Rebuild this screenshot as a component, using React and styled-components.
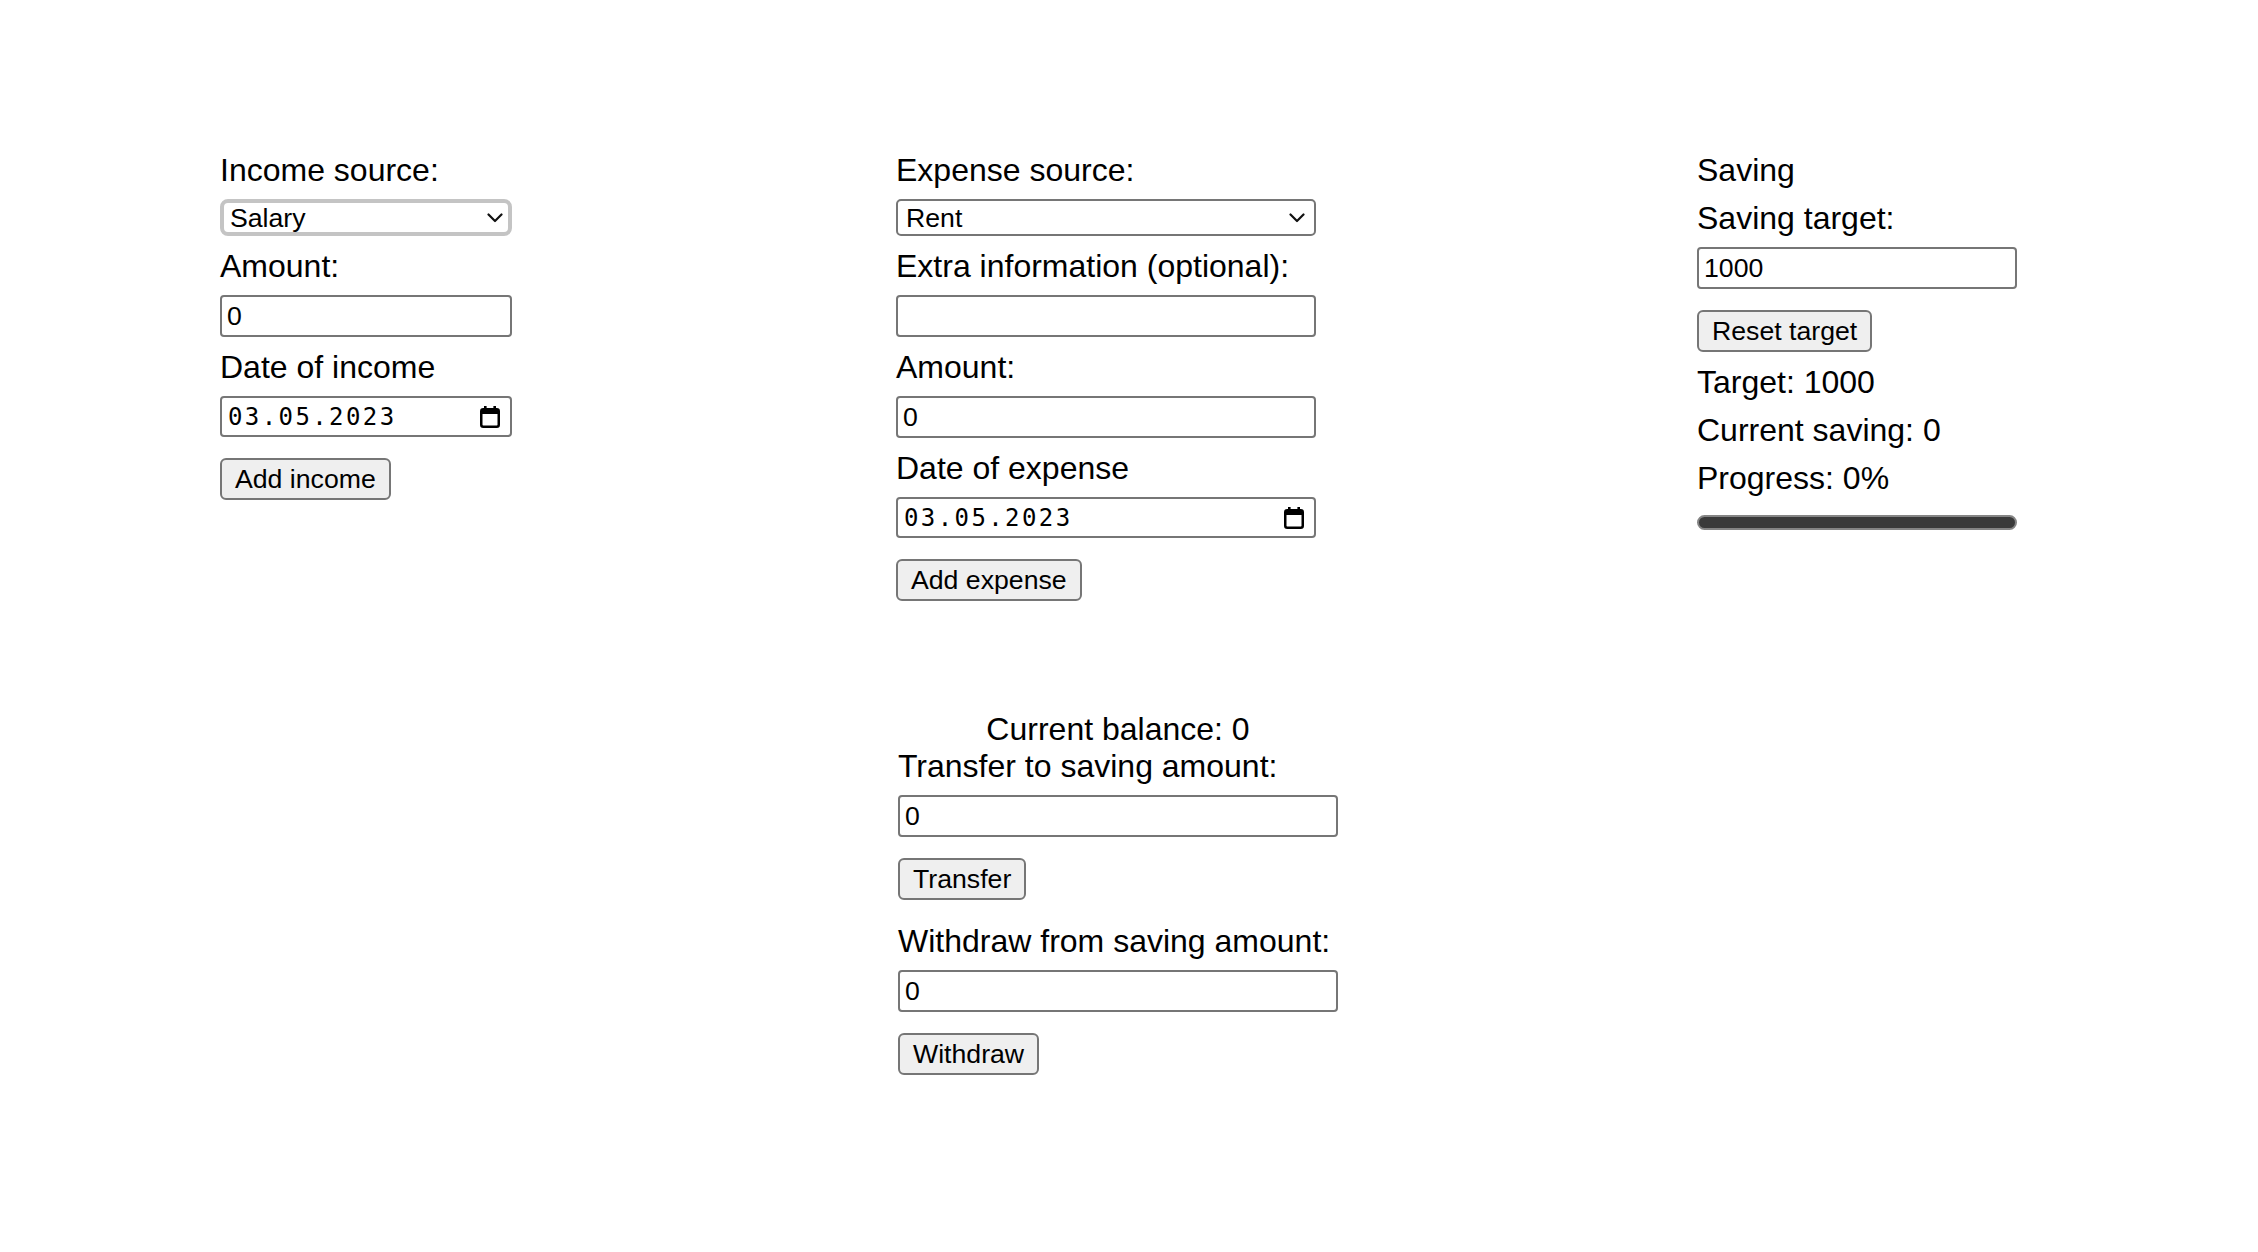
import React from "react";
import styled, { createGlobalStyle } from "styled-components";

const GlobalStyle = createGlobalStyle`
  html, body {
    margin: 0;
    padding: 0;
    background: #ffffff;
  }
  body {
    font-family: "Liberation Sans", Arial, sans-serif;
    color: #000000;
  }
  * { box-sizing: border-box; }
`;

const Page = styled.div`
  display: flex;
  flex-direction: column;
  align-items: flex-start;
  padding: 152px 0 80px 220px;
  min-height: 1252px;
`;

const TopRow = styled.div`
  display: flex;
  align-items: flex-start;
`;

const Column = styled.div`
  display: flex;
  flex-direction: column;
  align-items: flex-start;
  width: ${(p) => p.$width}px;
  margin-left: ${(p) => p.$offset || 0}px;
`;

const Text = styled.div`
  font-size: 32px;
  line-height: 36px;
  white-space: nowrap;
  margin-top: 12px;
  &:first-child { margin-top: 0; }
`;

const Heading = styled.div`
  align-self: stretch;
  text-align: center;
  font-size: 32px;
  line-height: 36px;
  white-space: nowrap;
`;

const Button = styled.button`
  height: 42px;
  margin-top: 21px;
  padding: 0 13px;
  font-family: "Liberation Sans", Arial, sans-serif;
  font-size: 26.67px;
  color: #000;
  background: #efefef;
  border: 2px solid #767676;
  border-radius: 6px;
  white-space: nowrap;
  cursor: pointer;
`;

const Label = styled.label`
  display: block;
  font-size: 32px;
  line-height: 36px;
  white-space: nowrap;
  margin-top: 12px;
  &:first-child { margin-top: 0; }
  ${Heading} + & { margin-top: 1px; }
  ${Button} + & { margin-top: 23px; }
`;

const Input = styled.input`
  display: block;
  width: 100%;
  height: 42px;
  margin-top: 11px;
  padding: 0 5px;
  font-family: "Liberation Sans", Arial, sans-serif;
  font-size: 26.67px;
  color: #000;
  background: #fff;
  border: 2px solid #767676;
  border-radius: 4px;
  outline: none;
`;

const SelectWrap = styled.div`
  position: relative;
  width: 100%;
  margin-top: 11px;
`;

const Select = styled.select`
  appearance: none;
  -webkit-appearance: none;
  display: block;
  width: 100%;
  height: 37px;
  padding: 0 30px 0 ${(p) => (p.$soft ? 6 : 8)}px;
  font-family: "Liberation Sans", Arial, sans-serif;
  font-size: 26.67px;
  color: #000;
  background: #fff;
  border: ${(p) => (p.$soft ? "4px solid #c4c4c4" : "2px solid #767676")};
  border-radius: ${(p) => (p.$soft ? 8 : 5)}px;
  outline: none;
`;

const Chevron = styled.svg`
  position: absolute;
  top: 14px;
  right: ${(p) => (p.$soft ? 9 : 11)}px;
  pointer-events: none;
`;

const DateBox = styled.div`
  display: flex;
  align-items: center;
  justify-content: space-between;
  width: 100%;
  height: 41px;
  margin-top: 11px;
  padding: 0 10px 0 6px;
  border: 2px solid #767676;
  border-radius: 4px;
  background: #fff;
`;

const DateText = styled.span`
  font-family: "DejaVu Sans Mono", "Liberation Mono", monospace;
  font-size: 24px;
  letter-spacing: 2.4px;
  color: #000;
`;

const ProgressBar = styled.div`
  width: 100%;
  height: 15px;
  margin-top: 19px;
  border: 2px solid #858585;
  border-radius: 8px;
  background: #3a3a3a;
`;

const BottomSection = styled.div`
  display: flex;
  flex-direction: column;
  align-items: flex-start;
  width: 440px;
  margin: 110px 0 0 678px;
`;

const ChevronIcon = ({ soft }) => (
  <Chevron $soft={soft} width="16" height="10" viewBox="0 0 16 10">
    <path d="M1.5 1.5 L8 8 L14.5 1.5" fill="none" stroke="#111" strokeWidth="2.2" strokeLinecap="round" strokeLinejoin="round" />
  </Chevron>
);

const CalendarIcon = () => (
  <svg width="20" height="22" viewBox="0 0 20 22">
    <rect x="4" y="0" width="2.6" height="5" fill="#000" />
    <rect x="13.4" y="0" width="2.6" height="5" fill="#000" />
    <rect x="1.25" y="3.25" width="17.5" height="17.5" rx="2" fill="none" stroke="#000" strokeWidth="2.5" />
    <rect x="1" y="3" width="18" height="5" fill="#000" />
  </svg>
);

const SelectField = ({ value, options, soft }) => (
  <SelectWrap>
    <Select $soft={soft} defaultValue={value}>
      {options.map((o) => (
        <option key={o}>{o}</option>
      ))}
    </Select>
    <ChevronIcon soft={soft} />
  </SelectWrap>
);

const DateField = ({ value }) => (
  <DateBox>
    <DateText>{value}</DateText>
    <CalendarIcon />
  </DateBox>
);

export default function App() {
  return (
    <>
      <GlobalStyle />
      <Page>
        <TopRow>
          <Column $width={292}>
            <Label>Income source:</Label>
            <SelectField soft value="Salary" options={["Salary", "Bonus", "Other"]} />
            <Label>Amount:</Label>
            <Input defaultValue="0" />
            <Label>Date of income</Label>
            <DateField value="03.05.2023" />
            <Button>Add income</Button>
          </Column>
          <Column $width={420} $offset={384}>
            <Label>Expense source:</Label>
            <SelectField value="Rent" options={["Rent", "Food", "Other"]} />
            <Label>Extra information (optional):</Label>
            <Input defaultValue="" />
            <Label>Amount:</Label>
            <Input defaultValue="0" />
            <Label>Date of expense</Label>
            <DateField value="03.05.2023" />
            <Button>Add expense</Button>
          </Column>
          <Column $width={320} $offset={381}>
            <Text>Saving</Text>
            <Label>Saving target:</Label>
            <Input defaultValue="1000" />
            <Button>Reset target</Button>
            <Text>Target: 1000</Text>
            <Text>Current saving: 0</Text>
            <Text>Progress: 0%</Text>
            <ProgressBar />
          </Column>
        </TopRow>
        <BottomSection>
          <Heading>Current balance: 0</Heading>
          <Label>Transfer to saving amount:</Label>
          <Input defaultValue="0" />
          <Button>Transfer</Button>
          <Label>Withdraw from saving amount:</Label>
          <Input defaultValue="0" />
          <Button>Withdraw</Button>
        </BottomSection>
      </Page>
    </>
  );
}
